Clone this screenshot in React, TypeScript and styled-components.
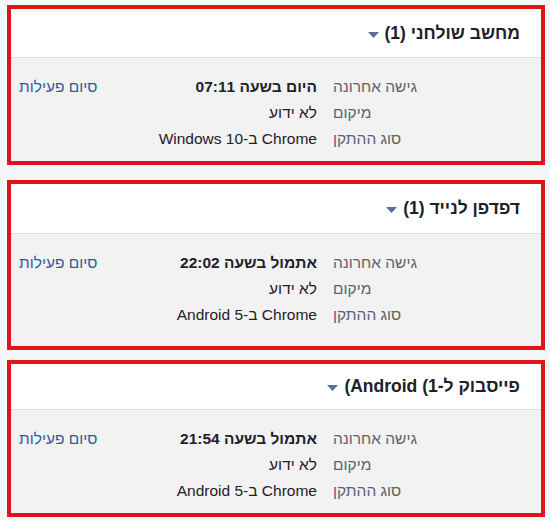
import React from "react";
import styled, { createGlobalStyle } from "styled-components";

const GlobalStyle = createGlobalStyle`
  html, body {
    margin: 0;
    padding: 0;
    background: #f5f6f7;
  }
  body {
    font-family: "Liberation Sans", Arial, "Noto Sans", sans-serif;
  }
`;

const Page = styled.div`
  direction: rtl;
  width: 538px;
  padding: 5px 0 0 7px;
  display: flex;
  flex-direction: column;
`;

const Card = styled.section<{ $gap: number }>`
  margin-top: ${({ $gap }) => $gap}px;
  border: 4px solid #e0141b;
  background: #f2f2f2;
`;

const Header = styled.div<{ $height: number }>`
  height: ${({ $height }) => $height}px;
  background: #fff;
  border-bottom: 1px solid #dcdee2;
  display: flex;
  align-items: center;
  padding-right: 21px;
  gap: 6px;
`;

const Title = styled.h3`
  margin: 0;
  font-size: 17.5px;
  font-weight: bold;
  color: #1d2129;
`;

const Caret = styled.svg`
  width: 11px;
  height: 6px;
  margin-top: 3px;
`;

const Body = styled.div<{ $bottom: number }>`
  padding: 16px 124px ${({ $bottom }) => $bottom}px 8px;
  display: flex;
  flex-direction: column;
`;

const Row = styled.div`
  display: flex;
  align-items: center;
  height: 26px;
  font-size: 15.5px;
`;

const Label = styled.div`
  width: 84px;
  flex: none;
  text-align: left;
  white-space: nowrap;
  color: #5d626b;
`;

const Value = styled.div<{ $strong?: boolean }>`
  margin-right: 16px;
  white-space: nowrap;
  color: #1d2129;
  font-weight: ${({ $strong }) => ($strong ? "bold" : "normal")};
`;

const EndLink = styled.a`
  margin-right: auto;
  color: #365899;
  text-decoration: none;
  cursor: pointer;
`;

type Session = {
  title: string;
  lastSeen: string;
  device: string;
  gap: number;
  headerHeight: number;
  bottom: number;
};

const sessions: Session[] = [
  { title: "מחשב שולחני (1)", lastSeen: "היום בשעה 07:11", device: "Chrome ב-Windows 10", gap: 0, headerHeight: 48, bottom: 9 },
  { title: "דפדפן לנייד (1)", lastSeen: "אתמול בשעה 22:02", device: "Chrome ב-Android 5", gap: 15, headerHeight: 49, bottom: 18 },
  // the closing bracket sits outside the LTR run, as in the original rendering
  { title: "פייסבוק ל-\u2066Android (1\u2069)", lastSeen: "אתמול בשעה 21:54", device: "Chrome ב-Android 5", gap: 10, headerHeight: 45, bottom: 9 },
];

const SessionCard: React.FC<{ s: Session }> = ({ s }) => (
  <Card $gap={s.gap}>
    <Header $height={s.headerHeight}>
      <Title>{s.title}</Title>
      <Caret viewBox="0 0 11 6">
        <path d="M0 0h11L5.5 6z" fill="#5b6e93" />
      </Caret>
    </Header>
    <Body $bottom={s.bottom}>
      <Row>
        <Label>גישה אחרונה</Label>
        <Value $strong>{s.lastSeen}</Value>
        <EndLink>סיום פעילות</EndLink>
      </Row>
      <Row>
        <Label>מיקום</Label>
        <Value>לא ידוע</Value>
      </Row>
      <Row>
        <Label>סוג ההתקן</Label>
        <Value>{s.device}</Value>
      </Row>
    </Body>
  </Card>
);

export default function App() {
  return (
    <>
      <GlobalStyle />
      <Page>
        {sessions.map((s) => (
          <SessionCard key={s.title} s={s} />
        ))}
      </Page>
    </>
  );
}
